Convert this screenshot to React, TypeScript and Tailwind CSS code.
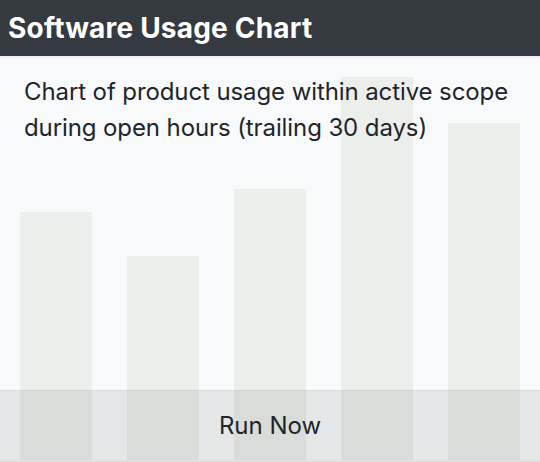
import React from 'react'

// bar heights in px, measured from the chart baseline
const bars = [248, 204, 271, 383, 337]

const App = () => {
  return (
    <div
      className="relative flex h-[462px] w-[540px] flex-col overflow-hidden border-b-2 border-[#dfe0e0] bg-[#f8f9fa] text-[#212529]"
      style={{ fontFamily: 'Inter, "Liberation Sans", sans-serif' }}
    >
      {/* background chart */}
      <div className="absolute inset-x-[20px] top-[58px] bottom-0 flex items-end gap-[35px]">
        {bars.map((h, i) => (
          <div key={i} className="flex-1 bg-[#eceeec]" style={{ height: h }} />
        ))}
      </div>

      <div className="relative flex h-[58px] items-center border-b-2 border-[#eceef0] bg-[#343a40] pl-2 text-[28px] font-bold tracking-[0.2px] text-white">
        Software Usage Chart
      </div>

      <div className="relative flex-1 px-6 pt-4 text-[24px] leading-[36px] tracking-[-0.1px]">
        Chart of product usage within active scope during open hours (trailing 30 days)
      </div>

      <div className="relative flex h-[70px] items-center justify-center border-t border-black/[0.04] bg-black/[0.075] text-[24px]">
        Run Now
      </div>
    </div>
  )
}

export default App
